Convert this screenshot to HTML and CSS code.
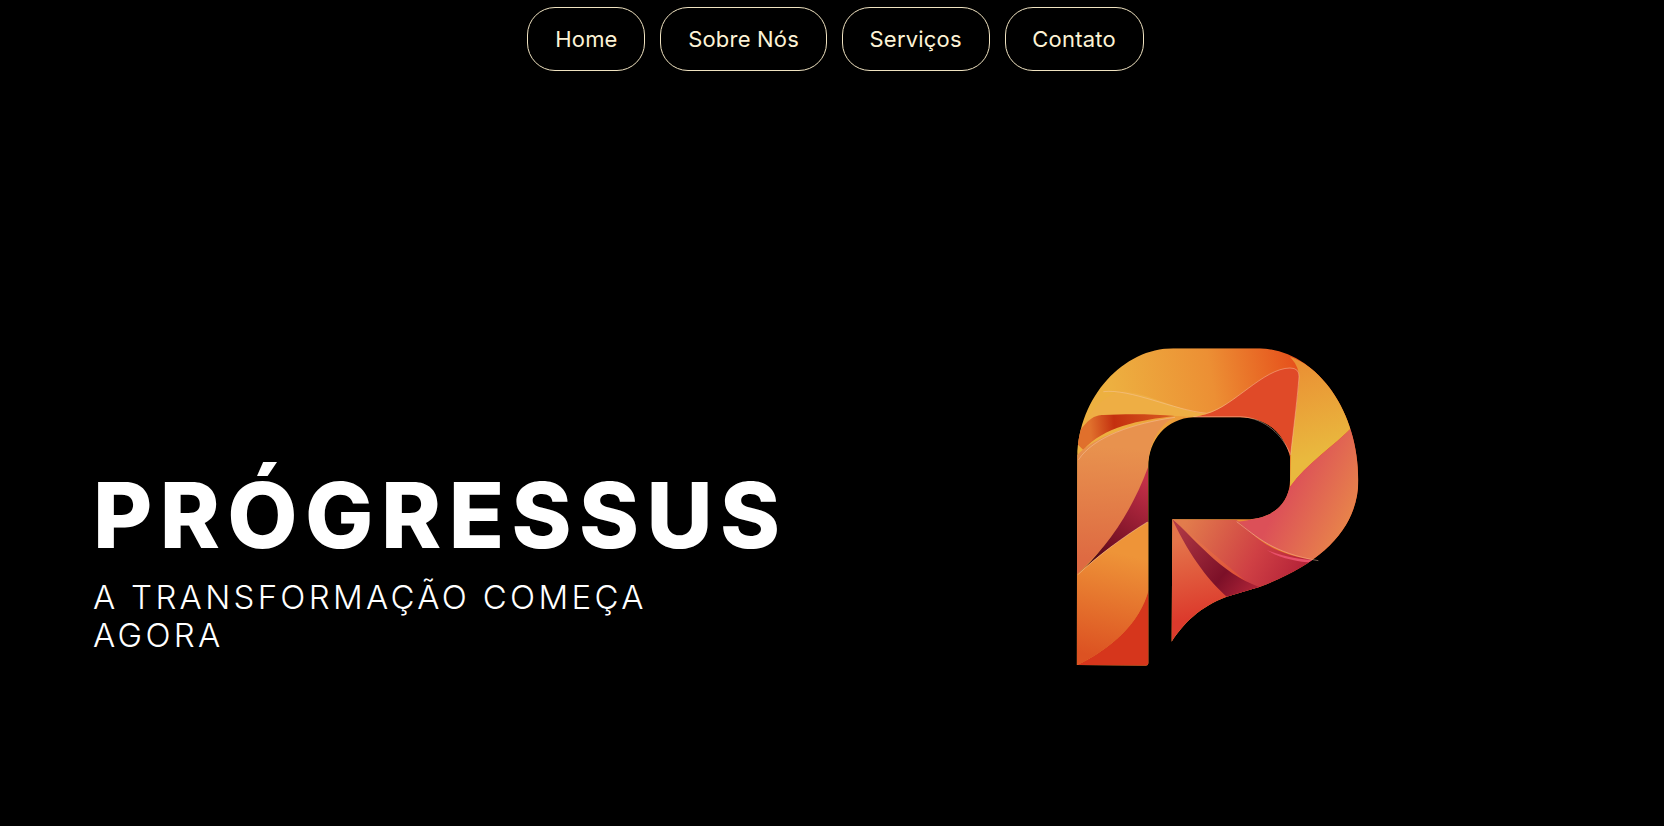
FILE: index.html
```html
<!DOCTYPE html>
<html lang="pt-BR">
<head>
    <meta charset="UTF-8">
    <meta name="viewport" content="width=device-width, initial-scale=1.0">
    <title>Prógressus</title>
    <link rel="stylesheet" href="styles.css">
</head>
<body>
    <nav class="menu">
        <a class="menu-link" href="#">Home</a>
        <a class="menu-link" href="#">Sobre Nós</a>
        <a class="menu-link" href="#">Serviços</a>
        <a class="menu-link" href="#">Contato</a>
    </nav>

    <main class="hero">
        <div class="hero-text">
            <h1>PRÓGRESSUS</h1>
            <h2>A TRANSFORMAÇÃO COMEÇA AGORA</h2>
        </div>
        <div class="hero-logo">
            <svg class="logo" viewBox="0 0 960 1020" width="320" height="340" role="img" aria-label="Logo Prógressus">
                <defs>
                    <clipPath id="shape">
                        <path d="M50 975 L52 350 C56 170 190 25 340 25 L600 25 C760 30 895 200 895 420 C895 560 790 670 600 740 L500 770 C420 800 370 850 335 905 L337 538 L560 538 C650 535 690 480 690 420 L690 350 C670 270 610 232 540 232 L400 232 C320 235 265 300 265 380 L265 970 Q265 977 258 977 Z"/>
                    </clipPath>
                    <linearGradient id="topBand" gradientUnits="userSpaceOnUse" x1="150" y1="150" x2="700" y2="60">
                        <stop offset="0" stop-color="#edb040"/>
                        <stop offset="0.55" stop-color="#ec8f34"/>
                        <stop offset="1" stop-color="#e6521c"/>
                    </linearGradient>
                    <linearGradient id="rightYellow" gradientUnits="userSpaceOnUse" x1="720" y1="70" x2="800" y2="340">
                        <stop offset="0" stop-color="#ea9034"/>
                        <stop offset="1" stop-color="#e9b93e"/>
                    </linearGradient>
                    <linearGradient id="rightPink" gradientUnits="userSpaceOnUse" x1="660" y1="480" x2="860" y2="580">
                        <stop offset="0" stop-color="#dc5058"/>
                        <stop offset="1" stop-color="#e8854a"/>
                    </linearGradient>
                    <linearGradient id="bottomFold" gradientUnits="userSpaceOnUse" x1="380" y1="540" x2="720" y2="720">
                        <stop offset="0" stop-color="#e27c4c"/>
                        <stop offset="0.6" stop-color="#cf4044"/>
                        <stop offset="1" stop-color="#b42238"/>
                    </linearGradient>
                    <linearGradient id="darkFold" gradientUnits="userSpaceOnUse" x1="350" y1="560" x2="590" y2="750">
                        <stop offset="0" stop-color="#b03844"/>
                        <stop offset="0.65" stop-color="#7c1028"/>
                        <stop offset="1" stop-color="#b02438"/>
                    </linearGradient>
                    <linearGradient id="stemTop" gradientUnits="userSpaceOnUse" x1="140" y1="320" x2="120" y2="660">
                        <stop offset="0" stop-color="#e8924e"/>
                        <stop offset="1" stop-color="#de6a42"/>
                    </linearGradient>
                    <linearGradient id="stemFold" gradientUnits="userSpaceOnUse" x1="262" y1="420" x2="70" y2="700">
                        <stop offset="0" stop-color="#c43048"/>
                        <stop offset="0.65" stop-color="#761024"/>
                        <stop offset="1" stop-color="#300410"/>
                    </linearGradient>
                    <linearGradient id="stemLow" gradientUnits="userSpaceOnUse" x1="180" y1="640" x2="110" y2="950">
                        <stop offset="0" stop-color="#ee9438"/>
                        <stop offset="1" stop-color="#dc5222"/>
                    </linearGradient>
                    <linearGradient id="redEdge" gradientUnits="userSpaceOnUse" x1="90" y1="250" x2="330" y2="230">
                        <stop offset="0" stop-color="#e0702c"/>
                        <stop offset="0.3" stop-color="#c4300f"/>
                        <stop offset="1" stop-color="#d85a20"/>
                    </linearGradient>
                    <linearGradient id="stemRed" gradientUnits="userSpaceOnUse" x1="370" y1="600" x2="420" y2="830">
                        <stop offset="0" stop-color="#e4744a"/>
                        <stop offset="1" stop-color="#dc3a2c"/>
                    </linearGradient>
                </defs>
                <g clip-path="url(#shape)">
                    <rect width="960" height="1020" fill="url(#topBand)"/>
                    <!-- lobulo direito -->
                    <path d="M440 222 C520 200 610 85 690 84 Q718 84 717 110 C712 180 700 270 692 345 L690 345 C660 260 600 232 540 232 L400 232 Z" fill="#e04a28"/>
                    <path d="M690 50 Q722 85 717 120 C712 190 700 270 692 345 L690 440 C740 370 820 320 880 258 C850 160 770 80 690 50 Z" fill="url(#rightYellow)"/>
                    <path d="M878 260 C820 320 740 370 690 440 C670 500 610 540 530 545 C590 590 640 640 775 662 C860 610 900 520 900 420 C900 360 890 300 878 260 Z" fill="url(#rightPink)"/>
                    <!-- perna direita, embaixo das dobras -->
                    <path d="M330 530 L620 760 L500 790 L330 915 Z" fill="url(#stemRed)"/>
                    <path d="M530 540 C590 590 620 640 775 662 L790 700 L600 760 L337 538 Z" fill="url(#bottomFold)"/>
                    <path d="M620 630 C670 650 720 658 775 662 L760 668 C710 665 660 655 620 630 Z" fill="#e8506a"/>
                    <path d="M337 538 C400 590 480 700 600 742 L502 772 C450 725 395 660 337 538 Z" fill="url(#darkFold)"/>
                    <!-- faixa superior esquerda -->
                    <path d="M70 265 C90 205 150 150 200 155 C280 165 360 215 440 222 L400 232 C290 222 170 225 110 230 Z" fill="#eeae44"/>
                    <path d="M40 300 C80 240 100 225 130 225 C200 222 280 222 345 228 C240 240 130 260 70 330 Z" fill="url(#redEdge)"/>
                    <path d="M40 360 C80 300 210 250 345 232 C300 250 265 310 264 385 C220 500 170 590 50 705 Z" fill="url(#stemTop)"/>
                    <path d="M264 382 L264 545 C190 590 110 650 52 705 C130 630 210 530 264 382 Z" fill="url(#stemFold)"/>
                    <path d="M50 705 C110 650 190 590 266 546 L266 750 C240 850 150 930 45 978 Z" fill="url(#stemLow)"/>
                    <path d="M45 978 C150 930 240 850 266 750 L270 985 Z" fill="#d6361c"/>
                </g>
                <g class="logo-line">
                    <path d="M55 360 C100 290 220 250 345 232"/>
                    <path d="M55 703 C110 650 190 590 262 546"/>
                    <path d="M440 220 C520 200 610 85 690 84 Q718 84 717 110 C712 180 700 270 692 345"/>
                    <path d="M400 230 L540 230 C600 232 660 270 690 340"/>
                    <path d="M130 155 C210 145 340 210 440 220"/>
                    <path d="M530 545 C590 590 640 640 775 662"/>
                </g>
            </svg>
        </div>
    </main>
</body>
</html>
```

FILE: styles.css
```css
* {
    box-sizing: border-box;
}

body {
    margin: 0;
    height: 826px;
    overflow: hidden;
    background-color: #000;
    font-family: "Inter", "Open Sans", sans-serif;
    color: #fff;
}

.menu {
    display: flex;
    justify-content: center;
    gap: 15px;
    padding-top: 7px;
    padding-left: 7px;
}

.menu-link {
    display: block;
    padding: 0 26.75px;
    height: 64px;
    line-height: 63px;
    border: 1px solid #efe2c0;
    border-radius: 28px;
    color: #fdf3d6;
    font-size: 22px;
    letter-spacing: 0.2px;
    text-decoration: none;
}

.hero {
    display: grid;
    grid-template-columns: 1076px 1fr;
}

.hero-text {
    padding: 394px 0 0 93px;
}

h1 {
    margin: 0;
    font-size: 91px;
    font-weight: 800;
    line-height: 100px;
    letter-spacing: 7.4px;
}

h2 {
    width: 600px;
    margin: 13px 0 0;
    font-size: 33px;
    font-weight: 300;
    line-height: 38px;
    letter-spacing: 3.3px;
}

.hero-logo {
    padding-top: 269px;
    margin-left: -16px;
}

.logo {
    display: block;
}

.logo-line path {
    fill: none;
    stroke: #f8c8a8;
    stroke-width: 2;
    opacity: 0.7;
}
```
